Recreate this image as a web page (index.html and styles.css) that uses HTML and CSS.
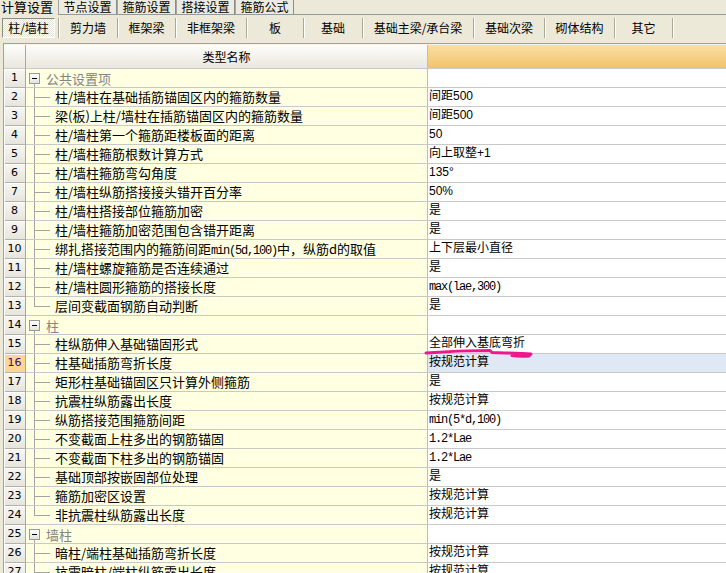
FILE: index.html
```html
<!DOCTYPE html>
<html lang="zh-CN">
<head>
<meta charset="utf-8">
<title>计算设置</title>
<link rel="stylesheet" href="styles.css">
</head>
<body>
<div class="app">
  <div class="tabs1">
    <div class="t1 active">计算设置</div>
    <div class="t1">节点设置</div>
    <div class="t1">箍筋设置</div>
    <div class="t1">搭接设置</div>
    <div class="t1">箍筋公式</div>
  </div>
  <div class="tabs2">
    <div class="t2 w59 first"><span class="pressed">柱/墙柱</span></div>
    <div class="t2 w59">剪力墙</div>
    <div class="t2 w58">框架梁</div>
    <div class="t2 w71">非框架梁</div>
    <div class="t2 w57">板</div>
    <div class="t2 w59">基础</div>
    <div class="t2 w111">基础主梁/承台梁</div>
    <div class="t2 w71">基础次梁</div>
    <div class="t2 w70">砌体结构</div>
    <div class="t2 w58">其它</div>
  </div>
  <div class="grid">
    <div class="row hdr">
      <div class="num"></div>
      <div class="name">类型名称</div>
      <div class="val"></div>
    </div>
    <div class="row"><div class="num">1</div><div class="name"><span class="box"></span><span class="grp">公共设置项</span></div><div class="val"></div></div>
    <div class="row"><div class="num">2</div><div class="name"><span class="conn"></span><span class="txt">柱/墙柱在基础插筋锚固区内的箍筋数量</span></div><div class="val">间距500</div></div>
    <div class="row"><div class="num">3</div><div class="name"><span class="conn"></span><span class="txt">梁(板)上柱/墙柱在插筋锚固区内的箍筋数量</span></div><div class="val">间距500</div></div>
    <div class="row"><div class="num">4</div><div class="name"><span class="conn"></span><span class="txt">柱/墙柱第一个箍筋距楼板面的距离</span></div><div class="val">50</div></div>
    <div class="row"><div class="num">5</div><div class="name"><span class="conn"></span><span class="txt">柱/墙柱箍筋根数计算方式</span></div><div class="val">向上取整+1</div></div>
    <div class="row"><div class="num">6</div><div class="name"><span class="conn"></span><span class="txt">柱/墙柱箍筋弯勾角度</span></div><div class="val">135°</div></div>
    <div class="row"><div class="num">7</div><div class="name"><span class="conn"></span><span class="txt">柱/墙柱纵筋搭接接头错开百分率</span></div><div class="val">50%</div></div>
    <div class="row"><div class="num">8</div><div class="name"><span class="conn"></span><span class="txt">柱/墙柱搭接部位箍筋加密</span></div><div class="val">是</div></div>
    <div class="row"><div class="num">9</div><div class="name"><span class="conn"></span><span class="txt">柱/墙柱箍筋加密范围包含错开距离</span></div><div class="val">是</div></div>
    <div class="row"><div class="num">10</div><div class="name"><span class="conn"></span><span class="txt">绑扎搭接范围内的箍筋间距<span class="mono">min(5d,100)</span>中，纵筋d的取值</span></div><div class="val">上下层最小直径</div></div>
    <div class="row"><div class="num">11</div><div class="name"><span class="conn"></span><span class="txt">柱/墙柱螺旋箍筋是否连续通过</span></div><div class="val">是</div></div>
    <div class="row"><div class="num">12</div><div class="name"><span class="conn"></span><span class="txt">柱/墙柱圆形箍筋的搭接长度</span></div><div class="val"><span class="mono">max(lae,300)</span></div></div>
    <div class="row"><div class="num">13</div><div class="name"><span class="conn last"></span><span class="txt">层间变截面钢筋自动判断</span></div><div class="val">是</div></div>
    <div class="row"><div class="num">14</div><div class="name"><span class="box"></span><span class="grp">柱</span></div><div class="val"></div></div>
    <div class="row"><div class="num">15</div><div class="name"><span class="conn"></span><span class="txt">柱纵筋伸入基础锚固形式</span></div><div class="val">全部伸入基底弯折</div></div>
    <div class="row sel"><div class="num">16</div><div class="name"><span class="conn"></span><span class="txt">柱基础插筋弯折长度</span></div><div class="val">按规范计算</div></div>
    <div class="row"><div class="num">17</div><div class="name"><span class="conn"></span><span class="txt">矩形柱基础锚固区只计算外侧箍筋</span></div><div class="val">是</div></div>
    <div class="row"><div class="num">18</div><div class="name"><span class="conn"></span><span class="txt">抗震柱纵筋露出长度</span></div><div class="val">按规范计算</div></div>
    <div class="row"><div class="num">19</div><div class="name"><span class="conn"></span><span class="txt">纵筋搭接范围箍筋间距</span></div><div class="val"><span class="mono">min(5*d,100)</span></div></div>
    <div class="row"><div class="num">20</div><div class="name"><span class="conn"></span><span class="txt">不变截面上柱多出的钢筋锚固</span></div><div class="val"><span class="mono">1.2*Lae</span></div></div>
    <div class="row"><div class="num">21</div><div class="name"><span class="conn"></span><span class="txt">不变截面下柱多出的钢筋锚固</span></div><div class="val"><span class="mono">1.2*Lae</span></div></div>
    <div class="row"><div class="num">22</div><div class="name"><span class="conn"></span><span class="txt">基础顶部按嵌固部位处理</span></div><div class="val">是</div></div>
    <div class="row"><div class="num">23</div><div class="name"><span class="conn"></span><span class="txt">箍筋加密区设置</span></div><div class="val">按规范计算</div></div>
    <div class="row"><div class="num">24</div><div class="name"><span class="conn last"></span><span class="txt">非抗震柱纵筋露出长度</span></div><div class="val">按规范计算</div></div>
    <div class="row"><div class="num">25</div><div class="name"><span class="box"></span><span class="grp">墙柱</span></div><div class="val"></div></div>
    <div class="row"><div class="num">26</div><div class="name"><span class="conn"></span><span class="txt">暗柱/端柱基础插筋弯折长度</span></div><div class="val">按规范计算</div></div>
    <div class="row"><div class="num">27</div><div class="name"><span class="conn"></span><span class="txt">抗震暗柱/端柱纵筋露出长度</span></div><div class="val">按规范计算</div></div>
  </div>
  <svg class="ink" width="726" height="573" viewBox="0 0 726 573">
    <path d="M426 353 C445 351.5 470 350.5 490 350.5 L492 352.5 C505 353 520 353 531 354 L529 356 C522 356.5 515 356 512 355.5" fill="none" stroke="#f0168c" stroke-width="3" stroke-linecap="round" stroke-linejoin="round"/>
  </svg>
</div>
</body>
</html>
```
FILE: styles.css
```css
html, body {
  margin: 0;
  padding: 0;
}
body {
  background: #ece9d8;
  font-family: "Noto Sans CJK SC", sans-serif;
  font-size: 12px;
  color: #000;
  width: 726px;
  height: 573px;
  overflow: hidden;
}
.app {
  position: relative;
  width: 726px;
  height: 573px;
  overflow: hidden;
}

/* top tabs */
.tabs1 {
  display: flex;
  height: 14px;
  border-bottom: 1px solid #919b9c;
}
.t1 {
  box-sizing: border-box;
  width: 59px;
  height: 14px;
  line-height: 14px;
  text-align: center;
  border-left: 1px solid #a7a6a0;
  border-right: 1px solid #8d8c85;
  background: #ecebe2;
  font-size: 12px;
  white-space: nowrap;
}
.t1.active {
  width: 58px;
  height: 15px;
  margin-bottom: -1px;
  border: none;
  background: #ece9d8;
  font-size: 13px;
  line-height: 13px;
  text-align: left;
  padding-left: 1px;
}

/* second tabs */
.tabs2 {
  display: flex;
  height: 28px;
  padding-top: 3px;
  box-sizing: border-box;
}
.t2 {
  box-sizing: border-box;
  height: 20px;
  line-height: 19px;
  text-align: center;
  border-right: 1px solid #aca899;
  box-shadow: 1px 0 0 #fff;
  font-size: 12px;
}
.t2.first {
  padding: 0 3px 0 2px;
}
.pressed {
  display: block;
  box-sizing: border-box;
  height: 20px;
  line-height: 18px;
  border-top: 1px solid #8e8c80;
  border-left: 1px solid #8e8c80;
  border-bottom: 1px solid #fff;
  border-right: 1px solid #fff;
  background: repeating-conic-gradient(#ffffff 0 25%, #e6e3d4 0 50%) 0 0 / 2px 2px;
}
.w57 { width: 57px; }
.w58 { width: 58px; }
.w59 { width: 59px; }
.w70 { width: 70px; }
.w71 { width: 71px; }
.w111 { width: 111px; }

/* grid */
.grid {
  margin-left: 3px;
  border-left: 1px solid #8fa4bd;
  border-top: 1px solid #8fa4bd;
  padding-top: 1px;
  background: #f4f3ee;
}
.row {
  display: grid;
  grid-template-columns: 22px 402px 1fr;
  height: 19px;
}
.num {
  box-sizing: border-box;
  border-right: 1px solid #a8a7a0;
  background: linear-gradient(#f7f6f2, #e5e4dc);
  box-shadow: inset 1px 1px 0 #ffffff, inset 0 -1px 0 #b3b2a8;
  text-align: center;
  line-height: 18px;
  font-family: "DejaVu Sans", "Noto Sans CJK SC", sans-serif;
  font-size: 11px;
}
.name {
  box-sizing: border-box;
  display: flex;
  align-items: center;
  background: #ffffe1;
  border-right: 1px solid #bdbdbd;
  border-bottom: 1px solid #c9c9c9;
  font-size: 13px;
  white-space: nowrap;
  overflow: hidden;
}
.txt {
  display: block;
  line-height: 17px;
  height: 18px;
}
.val {
  box-sizing: border-box;
  background: #fff;
  border-bottom: 1px solid #c9c9c9;
  padding-left: 1px;
  line-height: 17px;
  font-family: "Liberation Sans", "Noto Sans CJK SC", sans-serif;
  font-size: 12px;
  white-space: nowrap;
}
.mono {
  font-family: "Liberation Mono", monospace;
  font-size: 12px;
  letter-spacing: -1.2px;
}

/* header */
.row.hdr {
  height: 24px;
}
.hdr .num {
  background: linear-gradient(#fdfdfb, #e9e7de);
  box-shadow: none;
  border-bottom: 1px solid #c9c9c9;
}
.hdr .name {
  justify-content: center;
  background: linear-gradient(#fdfdfb, #e9e7de);
  font-size: 12px;
}
.hdr .val {
  background: linear-gradient(#fbdea3, #f2c36a);
}

/* tree */
.conn {
  flex: none;
  width: 29px;
  height: 18px;
  background:
    linear-gradient(#a4a4a4, #a4a4a4) 8px 0 / 1px 100% no-repeat,
    linear-gradient(#a4a4a4, #a4a4a4) 8px 9px / 16px 1px no-repeat;
}
.conn.last {
  background:
    linear-gradient(#a4a4a4, #a4a4a4) 8px 0 / 1px 10px no-repeat,
    linear-gradient(#a4a4a4, #a4a4a4) 8px 9px / 16px 1px no-repeat;
}
.box {
  flex: none;
  box-sizing: border-box;
  width: 11px;
  height: 11px;
  margin-left: 3px;
  margin-right: 6px;
  border: 1px solid #9a9a9a;
  background:
    linear-gradient(#000, #000) 2px 4px / 5px 1px no-repeat,
    linear-gradient(#ffffff, #e4e4de);
  position: relative;
}
.box::after {
  content: "";
  position: absolute;
  left: 4px;
  top: 10px;
  width: 1px;
  height: 4px;
  background: #a4a4a4;
}
.grp {
  color: #848484;
  line-height: 17px;
}

/* selection */
.sel .num {
  background: #fdd594;
  color: #3c0a6e;
}
.sel .val {
  background: #dfe8f5;
}

/* annotation ink */
.ink {
  position: absolute;
  left: 0;
  top: 0;
  pointer-events: none;
}
```
